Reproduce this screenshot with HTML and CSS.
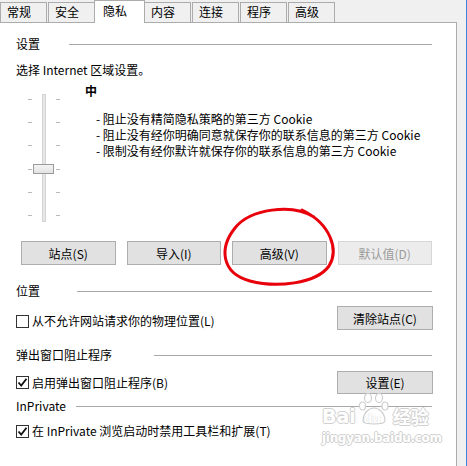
FILE: index.html
```html
<!DOCTYPE html>
<html lang="zh-CN">
<head>
    <meta charset="UTF-8">
    <meta name="viewport" content="width=device-width, initial-scale=1.0">
    <title>Internet 选项 - 隐私</title>
    <link rel="stylesheet" href="styles.css">
</head>
<body>
    <div class="window">
        <div class="tabs">
            <div class="tab">常规</div>
            <div class="tab">安全</div>
            <div class="tab active">隐私</div>
            <div class="tab">内容</div>
            <div class="tab">连接</div>
            <div class="tab">程序</div>
            <div class="tab">高级</div>
        </div>

        <div class="panel">
            <!-- 设置 -->
            <div class="group-head head-settings">
                <span>设置</span>
                <span class="rule"></span>
            </div>
            <p class="hint">选择 Internet 区域设置。</p>

            <div class="level">
                <svg class="slider" width="32" height="139" viewBox="0 0 32 139">
                    <rect x="14.5" y="11.5" width="3" height="127" fill="#e6e6e6" stroke="#d4d4d4"/>
                    <g stroke="#b8b8b8" stroke-width="1">
                        <line x1="0" y1="16.5" x2="4" y2="16.5"/><line x1="28" y1="16.5" x2="32" y2="16.5"/>
                        <line x1="0" y1="39.5" x2="4" y2="39.5"/><line x1="28" y1="39.5" x2="32" y2="39.5"/>
                        <line x1="0" y1="62.5" x2="4" y2="62.5"/><line x1="28" y1="62.5" x2="32" y2="62.5"/>
                        <line x1="0" y1="86.5" x2="4" y2="86.5"/><line x1="28" y1="86.5" x2="32" y2="86.5"/>
                        <line x1="0" y1="109.5" x2="4" y2="109.5"/><line x1="28" y1="109.5" x2="32" y2="109.5"/>
                        <line x1="0" y1="132.5" x2="4" y2="132.5"/><line x1="28" y1="132.5" x2="32" y2="132.5"/>
                    </g>
                    <defs>
                        <linearGradient id="thumb" x1="0" y1="0" x2="0" y2="1">
                            <stop offset="0" stop-color="#f4f4f4"/>
                            <stop offset="1" stop-color="#e2e2e2"/>
                        </linearGradient>
                    </defs>
                    <rect x="5.5" y="81.5" width="20" height="9" fill="url(#thumb)" stroke="#9a9a9a"/>
                </svg>
                <div class="level-text">
                    <div class="level-name">中</div>
                    <ul class="rules">
                        <li>- 阻止没有精简隐私策略的第三方 Cookie</li>
                        <li>- 阻止没有经你明确同意就保存你的联系信息的第三方 Cookie</li>
                        <li>- 限制没有经你默许就保存你的联系信息的第三方 Cookie</li>
                    </ul>
                </div>
            </div>

            <div class="btn-row">
                <button class="btn">站点(S)</button>
                <button class="btn">导入(I)</button>
                <button class="btn">高级(V)</button>
                <button class="btn" disabled>默认值(D)</button>
            </div>

            <!-- 位置 -->
            <div class="group-head head-location">
                <span>位置</span>
                <span class="rule"></span>
            </div>
            <div class="option-row row-location">
                <label class="check"><span class="box"></span>从不允许网站请求你的物理位置(L)</label>
                <button class="btn">清除站点(C)</button>
            </div>

            <!-- 弹出窗口阻止程序 -->
            <div class="group-head head-popup">
                <span>弹出窗口阻止程序</span>
                <span class="rule"></span>
            </div>
            <div class="option-row row-popup">
                <label class="check"><span class="box checked"><svg width="11" height="11" viewBox="0 0 11 11"><path d="M1.5 5.5 L4.2 8.5 L9.5 1.8" fill="none" stroke="#111" stroke-width="1.8"/></svg></span>启用弹出窗口阻止程序(B)</label>
                <button class="btn">设置(E)</button>
            </div>

            <!-- InPrivate -->
            <div class="group-head head-private">
                <span>InPrivate</span>
                <span class="rule"></span>
            </div>
            <div class="option-row row-private">
                <label class="check"><span class="box checked"><svg width="11" height="11" viewBox="0 0 11 11"><path d="M1.5 5.5 L4.2 8.5 L9.5 1.8" fill="none" stroke="#111" stroke-width="1.8"/></svg></span>在 InPrivate 浏览启动时禁用工具栏和扩展(T)</label>
            </div>
        </div>

        <!-- 红色圈注 -->
        <svg class="mark" width="467" height="466" viewBox="0 0 467 466">
            <path d="M314 217 C292 203, 250 209, 235 228 C219 248, 221 273, 250 281 C276 288, 316 284, 329 266 C339 250, 331 224, 302 210" fill="none" stroke="#e8000a" stroke-width="3" stroke-linecap="round"/>
        </svg>

        <!-- 水印 -->
        <div class="watermark">
            <div class="wm-top">
                <span class="wm-bai">Bai</span>
                <span class="wm-paw">
                    <svg width="30" height="32" viewBox="0 0 30 32">
                        <g fill="#fff" stroke="#cfcfcf" stroke-width="1.2">
                            <ellipse cx="9" cy="5" rx="3.5" ry="4.5"/>
                            <ellipse cx="20" cy="5" rx="3.5" ry="4.5"/>
                            <ellipse cx="3.5" cy="13" rx="3" ry="4"/>
                            <ellipse cx="26" cy="13" rx="3" ry="4"/>
                            <path d="M4 28 C4 20, 10 15, 15 15 C20 15, 26 20, 26 28 C26 32, 4 32, 4 28 Z"/>
                        </g>
                    </svg>
                    <span class="wm-du">du</span>
                </span>
                <span class="wm-jy">经验</span>
            </div>
            <div class="wm-url">jingyan.baidu.com</div>
        </div>
    </div>
</body>
</html>
```

FILE: styles.css
```css
* {
    margin: 0;
    padding: 0;
    box-sizing: border-box;
}

body {
    font-family: "Noto Sans CJK SC", "Noto Sans", sans-serif;
    font-size: 12px;
    line-height: 16px;
    color: #000;
    background: #f0f0f0;
}

.window {
    position: relative;
    width: 467px;
    height: 466px;
    overflow: hidden;
    background: #f0f0f0;
    border-right: 1px solid #3d86e0;
}

/* 选项卡 */
.tabs {
    display: flex;
    gap: 1px;
    height: 22px;
    align-items: flex-end;
    position: relative;
    z-index: 1;
}

.tab {
    width: 47px;
    height: 20px;
    padding-left: 6px;
    line-height: 18px;
    background: #f0f0f0;
    border: 1px solid #acacac;
    border-bottom: none;
}

.tab.active {
    width: 51px;
    height: 23px;
    margin: 0 -2px -1px;
    padding-left: 8px;
    line-height: 19px;
    background: #fff;
    position: relative;
}

/* 面板 */
.panel {
    width: 457px;
    height: 460px;
    background: #fff;
    border-top: 1px solid #acacac;
    border-right: 1px solid #acacac;
    padding: 13px 24px 0 16px;
}

.group-head {
    display: flex;
    align-items: center;
    height: 16px;
}

.group-head .rule {
    flex: 1;
    height: 1px;
    margin-top: 1px;
    background: #a8a8a8;
}

.head-settings .rule { margin-left: 29px; }
.head-location { margin-top: 18px; }
.head-location .rule { margin-left: 37px; }
.head-popup { margin-top: 17px; }
.head-popup .rule { margin-left: 42px; }
.head-private { margin-top: 4px; }
.head-private .rule { margin-left: 10px; }

.hint {
    margin-top: 10px;
}

/* 隐私级别 */
.level {
    display: flex;
    margin-top: 5px;
    height: 139px;
}

.slider {
    margin-left: 12px;
    flex-shrink: 0;
}

.level-text {
    margin-left: 25px;
}

.level-name {
    font-weight: bold;
}

.rules {
    list-style: none;
    margin-top: 12px;
    margin-left: 11px;
    line-height: 16px;
    white-space: nowrap;
}

/* 按钮 */
.btn-row {
    display: flex;
    gap: 11px;
    margin-top: 19px;
    padding-left: 5px;
}

.btn {
    width: 96px;
    height: 24px;
    font-family: inherit;
    font-size: 12px;
    color: #000;
    background: #e1e1e1;
    border: 1px solid #adadad;
}

.btn:disabled {
    color: #9c9c9c;
    background: #ececec;
    border-color: #d6d6d6;
}

.option-row {
    display: flex;
    justify-content: space-between;
    align-items: center;
}

.row-location {
    margin-top: 7px;
}

.row-location .btn,
.row-popup .btn {
    margin-right: -1px;
}

.row-location .check {
    padding-top: 6px;
}

.row-popup {
    margin-top: 8px;
}

.row-popup .btn {
    height: 23px;
}

.row-private {
    margin-top: 9px;
}

.check {
    display: flex;
    align-items: center;
    gap: 3px;
}

.box {
    width: 13px;
    height: 13px;
    border: 1px solid #333;
    background: #fff;
    display: flex;
    align-items: center;
    justify-content: center;
}

/* 圈注 */
.mark {
    position: absolute;
    left: 0;
    top: 0;
    pointer-events: none;
}

/* 水印 */
.watermark {
    position: absolute;
    left: 322px;
    top: 392px;
    font-family: "DejaVu Sans", sans-serif;
    font-weight: bold;
    color: #fff;
    text-shadow: 1px 0 0 #cfcfcf, -1px 0 0 #cfcfcf, 0 1px 0 #cfcfcf, 0 -1px 0 #cfcfcf;
    pointer-events: none;
}

.wm-top {
    display: flex;
    align-items: flex-end;
    height: 34px;
}

.wm-bai {
    font-size: 19px;
    line-height: 20px;
}

.wm-paw {
    position: relative;
    width: 32px;
    height: 33px;
    margin-left: 2px;
}

.wm-paw svg {
    position: absolute;
    left: 1px;
    top: 0;
}

.wm-du {
    position: absolute;
    left: 6px;
    bottom: 0;
    font-size: 12px;
    line-height: 14px;
    color: #fff;
    text-shadow: 0 0 1px #bbb;
}

.wm-jy {
    font-family: "Noto Sans CJK SC", sans-serif;
    font-size: 18px;
    line-height: 20px;
    margin-left: 3px;
}

.wm-url {
    font-size: 12px;
    line-height: 14px;
    margin-top: 5px;
    letter-spacing: -0.3px;
}
```
